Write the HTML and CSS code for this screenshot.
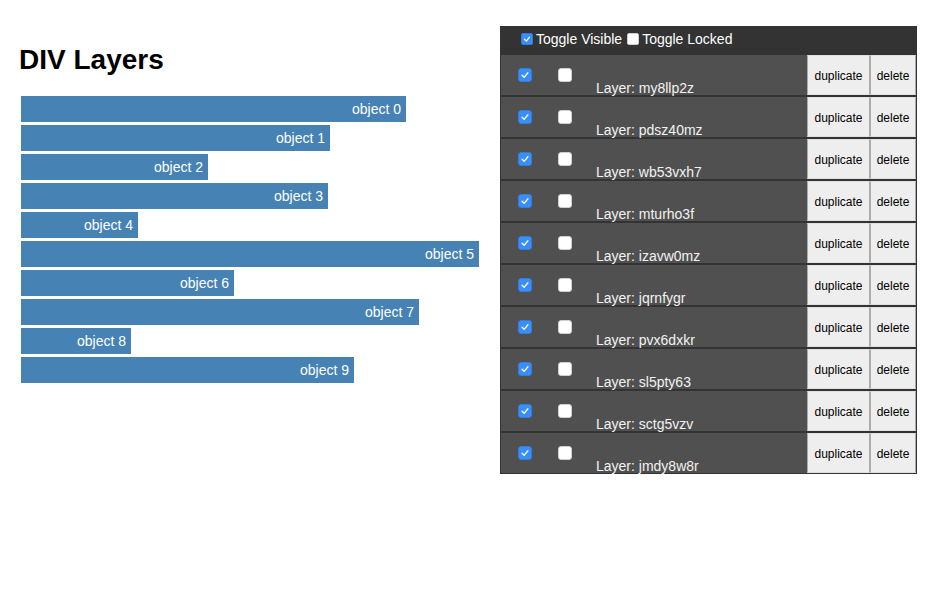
FILE: index.html
```html
<!DOCTYPE html>
<html>
<head>
<meta charset="utf-8">
<title>DIV Layers</title>
<link rel="stylesheet" href="styles.css">
</head>
<body>
<div class="page">
  <div class="left">
    <h1 class="title">DIV Layers</h1>
    <div class="bars">
      <div class="bar" style="width:385px">object 0</div>
      <div class="bar" style="width:309px">object 1</div>
      <div class="bar" style="width:187px">object 2</div>
      <div class="bar" style="width:307px">object 3</div>
      <div class="bar" style="width:117px">object 4</div>
      <div class="bar" style="width:458px">object 5</div>
      <div class="bar" style="width:213px">object 6</div>
      <div class="bar" style="width:398px">object 7</div>
      <div class="bar" style="width:110px">object 8</div>
      <div class="bar" style="width:333px">object 9</div>
    </div>
  </div>
  <div class="panel">
    <div class="panel-head">
      <span class="cb cb-small cb-on"><svg viewBox="0 0 12 12"><path d="M3 6.3 L5.2 8.5 L9 3.8"/></svg></span>
      <span class="head-label">Toggle Visible</span>
      <span class="cb cb-small cb-off"></span>
      <span class="head-label">Toggle Locked</span>
    </div>
    <div class="row">
      <span class="cb cb-on vis"><svg viewBox="0 0 14 14"><path d="M3.6 7.3 L6 9.7 L10.4 4.4"/></svg></span>
      <span class="cb cb-off lock"></span>
      <span class="layer-name">Layer: my8llp2z</span>
      <span class="spacer"></span>
      <button class="btn btn-dup">duplicate</button><button class="btn btn-del">delete</button>
    </div>
    <div class="row">
      <span class="cb cb-on vis"><svg viewBox="0 0 14 14"><path d="M3.6 7.3 L6 9.7 L10.4 4.4"/></svg></span>
      <span class="cb cb-off lock"></span>
      <span class="layer-name">Layer: pdsz40mz</span>
      <span class="spacer"></span>
      <button class="btn btn-dup">duplicate</button><button class="btn btn-del">delete</button>
    </div>
    <div class="row">
      <span class="cb cb-on vis"><svg viewBox="0 0 14 14"><path d="M3.6 7.3 L6 9.7 L10.4 4.4"/></svg></span>
      <span class="cb cb-off lock"></span>
      <span class="layer-name">Layer: wb53vxh7</span>
      <span class="spacer"></span>
      <button class="btn btn-dup">duplicate</button><button class="btn btn-del">delete</button>
    </div>
    <div class="row">
      <span class="cb cb-on vis"><svg viewBox="0 0 14 14"><path d="M3.6 7.3 L6 9.7 L10.4 4.4"/></svg></span>
      <span class="cb cb-off lock"></span>
      <span class="layer-name">Layer: mturho3f</span>
      <span class="spacer"></span>
      <button class="btn btn-dup">duplicate</button><button class="btn btn-del">delete</button>
    </div>
    <div class="row">
      <span class="cb cb-on vis"><svg viewBox="0 0 14 14"><path d="M3.6 7.3 L6 9.7 L10.4 4.4"/></svg></span>
      <span class="cb cb-off lock"></span>
      <span class="layer-name">Layer: izavw0mz</span>
      <span class="spacer"></span>
      <button class="btn btn-dup">duplicate</button><button class="btn btn-del">delete</button>
    </div>
    <div class="row">
      <span class="cb cb-on vis"><svg viewBox="0 0 14 14"><path d="M3.6 7.3 L6 9.7 L10.4 4.4"/></svg></span>
      <span class="cb cb-off lock"></span>
      <span class="layer-name">Layer: jqrnfygr</span>
      <span class="spacer"></span>
      <button class="btn btn-dup">duplicate</button><button class="btn btn-del">delete</button>
    </div>
    <div class="row">
      <span class="cb cb-on vis"><svg viewBox="0 0 14 14"><path d="M3.6 7.3 L6 9.7 L10.4 4.4"/></svg></span>
      <span class="cb cb-off lock"></span>
      <span class="layer-name">Layer: pvx6dxkr</span>
      <span class="spacer"></span>
      <button class="btn btn-dup">duplicate</button><button class="btn btn-del">delete</button>
    </div>
    <div class="row">
      <span class="cb cb-on vis"><svg viewBox="0 0 14 14"><path d="M3.6 7.3 L6 9.7 L10.4 4.4"/></svg></span>
      <span class="cb cb-off lock"></span>
      <span class="layer-name">Layer: sl5pty63</span>
      <span class="spacer"></span>
      <button class="btn btn-dup">duplicate</button><button class="btn btn-del">delete</button>
    </div>
    <div class="row">
      <span class="cb cb-on vis"><svg viewBox="0 0 14 14"><path d="M3.6 7.3 L6 9.7 L10.4 4.4"/></svg></span>
      <span class="cb cb-off lock"></span>
      <span class="layer-name">Layer: sctg5vzv</span>
      <span class="spacer"></span>
      <button class="btn btn-dup">duplicate</button><button class="btn btn-del">delete</button>
    </div>
    <div class="row">
      <span class="cb cb-on vis"><svg viewBox="0 0 14 14"><path d="M3.6 7.3 L6 9.7 L10.4 4.4"/></svg></span>
      <span class="cb cb-off lock"></span>
      <span class="layer-name">Layer: jmdy8w8r</span>
      <span class="spacer"></span>
      <button class="btn btn-dup">duplicate</button><button class="btn btn-del">delete</button>
    </div>
  </div>
</div>
</body>
</html>
```

FILE: styles.css
```css
html, body {
  margin: 0;
  padding: 0;
  background: #ffffff;
}

body {
  font-family: "Liberation Sans", Arial, Helvetica, sans-serif;
  font-size: 14px;
  color: #000;
}

.page {
  display: flex;
  align-items: flex-start;
}

.left {
  width: 481px;
  padding-left: 19px;
  padding-top: 44px;
}

.title {
  margin: 0;
  font-size: 28px;
  line-height: 32px;
  font-weight: bold;
  color: #000;
}

.bars {
  margin-top: 20px;
  margin-left: 2px;
  display: flex;
  flex-direction: column;
  gap: 3px;
}

.bar {
  height: 26px;
  line-height: 26px;
  background: #4682b4;
  color: #ffffff;
  text-align: right;
  padding-right: 5px;
  box-sizing: border-box;
  font-size: 14px;
  white-space: nowrap;
}

.panel {
  margin-top: 26px;
  width: 417px;
  box-sizing: border-box;
  background: #333333;
  padding: 0 1px 1px 1px;
  display: flex;
  flex-direction: column;
  gap: 2px;
}

.panel-head {
  height: 27px;
  display: flex;
  align-items: center;
  padding-left: 20px;
  padding-bottom: 1px;
  box-sizing: border-box;
  color: #ffffff;
  font-size: 14px;
  line-height: 16px;
}

.head-label {
  margin-left: 3px;
  margin-right: 5px;
}

.cb {
  display: inline-flex;
  align-items: center;
  justify-content: center;
  width: 14px;
  height: 14px;
  border-radius: 3px;
  box-sizing: border-box;
  flex: none;
}

.cb svg {
  width: 100%;
  height: 100%;
  display: block;
}

.cb svg path {
  fill: none;
  stroke: #ffffff;
  stroke-width: 1.5;
  stroke-linecap: round;
  stroke-linejoin: round;
}

.cb-small {
  width: 12px;
  height: 12px;
  border-radius: 2px;
}

.cb-on {
  background: #3a8ef6;
  border: 1px solid #2f7de0;
}

.cb-off {
  background: #ffffff;
  border: 1px solid #cfcfcf;
}

.row {
  height: 40px;
  background: #505050;
  display: flex;
  align-items: center;
}

.vis {
  margin-left: 17px;
}

.lock {
  margin-left: 26px;
}

.layer-name {
  align-self: flex-start;
  margin-top: 25px;
  margin-left: 24px;
  line-height: 16px;
  font-size: 14px;
  color: #f2f2f2;
  white-space: nowrap;
}

.spacer {
  flex: 1;
}

.btn {
  align-self: stretch;
  margin: 0;
  padding: 2px 0 0 0;
  background: #eeeeee;
  border: 1px solid #ababab;
  border-top-color: #e0e0e0;
  border-bottom-color: #e0e0e0;
  font-family: "Liberation Sans", Arial, Helvetica, sans-serif;
  font-size: 12px;
  color: #000;
  text-align: center;
  box-sizing: border-box;
  border-radius: 0;
}

.btn-dup {
  width: 63px;
}

.btn-del {
  width: 46px;
}
```
